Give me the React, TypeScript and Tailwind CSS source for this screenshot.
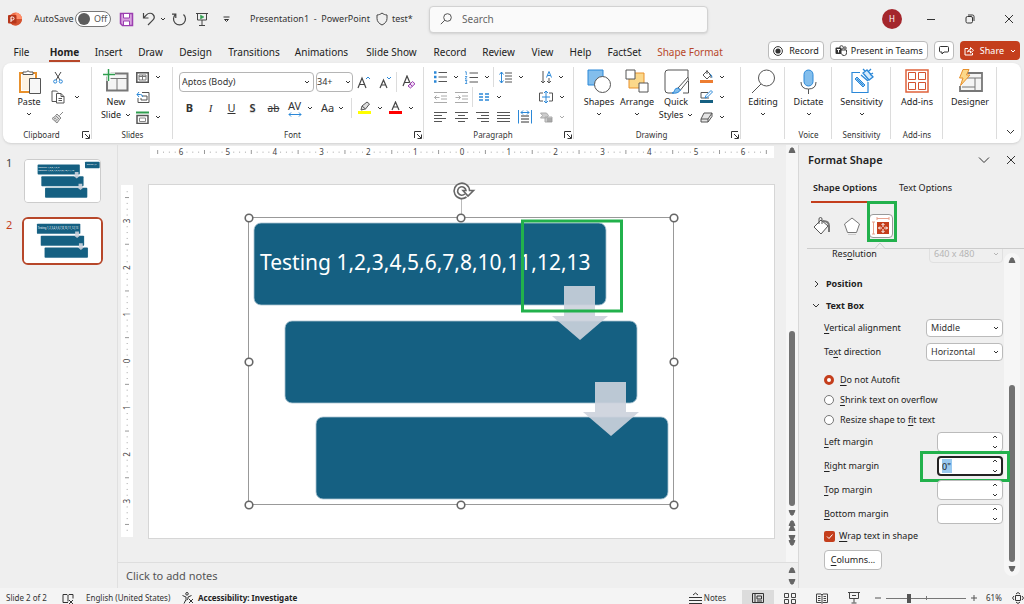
import type { ReactNode } from "react";

type IconProps = { w: number; h: number; children: ReactNode; className?: string };

function Icon({ w, h, children, className = "" }: IconProps) {
  return (
    <svg width={w} height={h} viewBox={`0 0 ${w} ${h}`} fill="none" stroke="#555" className={`shrink-0 ${className}`} aria-hidden="true">
      {children}
    </svg>
  );
}

function Chevron({ color = "#333", flip = false }: { color?: string; flip?: boolean }) {
  return (
    <Icon w={6} h={4}>
      <path d={flip ? "M1 3l2-2 2 2" : "M1 1l2 2 2-2"} stroke={color} />
    </Icon>
  );
}

function Tool({ label, children, wide = false }: { label: string; children: ReactNode; wide?: boolean }) {
  return (
    <button aria-label={label} className={`flex h-5 shrink-0 items-center justify-center ${wide ? "w-8 gap-1.5" : "w-[21px]"}`}>
      {children}
    </button>
  );
}

function Drop({ label }: { label: string }) {
  return (
    <button aria-label={label} className="flex h-5 w-2.5 shrink-0 items-center justify-center">
      <Chevron />
    </button>
  );
}

function Launcher({ label }: { label: string }) {
  return (
    <button aria-label={label} className="absolute right-0.5 bottom-1">
      <Icon w={8} h={8}>
        <path d="M7 .5H.5V7M3 3l4 4M7.500 3.500v4h-4" stroke="#333" />
      </Icon>
    </button>
  );
}

function Group({ name, className, launcher = false, children }: { name: string; className: string; launcher?: boolean; children: ReactNode }) {
  return (
    <section className={`relative flex shrink-0 flex-col ${className}`}>
      <div className="flex h-16 pt-1">{children}</div>
      <div className={`text-center text-[8px] leading-4 text-[#333] ${launcher ? "pr-3" : ""}`}>{name}</div>
      {launcher && <Launcher label={`${name} settings`} />}
      <span className="absolute top-1 right-0 bottom-1 w-px bg-[#dcdcdc]" />
    </section>
  );
}

function BigButton({ icon, lines, chevron = false, className = "" }: { icon: ReactNode; lines: string[]; chevron?: boolean; className?: string }) {
  return (
    <button className={`flex flex-col items-center text-[9px] leading-[13px] text-[#222] ${className}`}>
      <span className="flex h-7 items-center">{icon}</span>
      {lines.map((line, i) => (
        <span key={line} className="flex items-center gap-1 whitespace-nowrap">
          {line}
          {i === 1 && <Chevron />}
        </span>
      ))}
      {chevron && <span className="flex h-3 items-center"><Chevron /></span>}
    </button>
  );
}

function Lines({ rows }: { rows: [number, number][] }) {
  return (
    <Icon w={13} h={12}>
      {rows.map(([x1, x2], i) => (
        <path key={i} d={`M${x1} ${i * 3 + 1.5}H${x2}`} />
      ))}
    </Icon>
  );
}

const BLUE = "#2b88d8";

function TitleBar() {
  return (
    <header className="flex h-[38px] shrink-0 items-center text-[10px] text-[#333]">
      <div className="flex w-[429px] shrink-0 items-center pl-2">
        <svg width="14" height="14" viewBox="0 0 14 14" aria-hidden="true">
          <circle cx="7.5" cy="7" r="6.5" fill="#ed6c47" />
          <path d="M7.5.5A6.5 6.5 0 0 1 14 7H7.500z" fill="#ff8f6b" />
          <path d="M1 7h13a6.500 6.500 0 0 1-12 3.500z" fill="#d35230" />
          <rect y="3" width="8.500" height="8.500" rx="1" fill="#b7361a" />
          <path d="M3 10V5h1.500a1.400 1.400 0 0 1 0 3H3" fill="none" stroke="#fff" />
        </svg>
        <label htmlFor="autosave" className="ml-3 w-[37px] text-[9px] whitespace-nowrap">AutoSave</label>
        <span className="relative ml-1 flex h-4 w-9 items-center rounded-full border border-[#777] bg-white">
          <input id="autosave" type="checkbox" className="absolute inset-0 m-0 opacity-0" />
          <span className="ml-0.5 size-3 rounded-full bg-[#5c5c5c]" />
          <span className="ml-1 text-[9px] text-[#555]">Off</span>
        </span>
        <button aria-label="Save" className="ml-2">
          <Icon w={15} h={15}>
            <path d="M1.500 1.500h12v12h-10l-2-2z" fill="#d9a3e0" stroke="#9b3fb0" strokeWidth="1.500" />
            <path d="M4.500 2v4h6V2M4.500 13V9h6v4" fill="#fff" stroke="#9b3fb0" />
          </Icon>
        </button>
        <button aria-label="Undo" className="ml-2">
          <Icon w={14} h={14}>
            <path d="M1.500 1v5h5M1.500 6l3-3.200c2-2 5-2 6.500-.3 1.600 1.700 1.500 4-.2 5.700L6 13" stroke="#444" strokeWidth="1.200" />
          </Icon>
        </button>
        <span className="ml-0.5 flex"><Drop label="Undo history" /></span>
        <button aria-label="Redo" className="ml-1">
          <Icon w={15} h={14}>
            <path d="M3.500 2.500A6 6 0 1 0 11.500 2.500M3.800 6V2.200H0" stroke="#444" strokeWidth="1.200" />
          </Icon>
        </button>
        <button aria-label="Start from beginning" className="ml-2">
          <Icon w={14} h={14}>
            <path d="M1 1.500h12M2.500 2v6h9V2M7 8v5M4 13.500h6" stroke="#444" />
            <path d="M5.500 3v4l3.500-2z" fill="#2f9e4f" stroke="#2f9e4f" strokeWidth=".5" />
          </Icon>
        </button>
        <button aria-label="Customize toolbar" className="ml-3.5">
          <Icon w={7} h={7}>
            <path d="M.5 1h6M1.500 3.500h4l-2 2z" stroke="#333" />
          </Icon>
        </button>
        <h1 className="ml-5 whitespace-pre text-[9px]">Presentation1  -  PowerPoint</h1>
        <Icon w={12} h={14} className="ml-1.5">
          <path d="M6 1c1.500 1.300 3 1.800 5 2v3.500c0 3-2 5-5 6.500-3-1.500-5-3.500-5-6.500V3c2-.2 3.500-.7 5-2z" stroke="#444" />
        </Icon>
        <span className="ml-1 text-[9px]">test*</span>
      </div>
      <div className="flex h-[27px] max-w-[480px] flex-1 items-center rounded border border-[#d2d2d2] bg-[#fafafa] shadow-sm">
        <Icon w={12} h={12} className="ml-2.5">
          <circle cx="7.500" cy="4.500" r="3.800" />
          <path d="M4.800 7.200L.8 11.200" />
        </Icon>
        <input type="search" aria-label="Search" placeholder="Search" className="ml-2.5 w-full bg-transparent text-[10px] outline-none placeholder:text-[#666]" />
      </div>
      <div className="ml-auto flex w-[316px] items-center justify-end">
        <button aria-label="Account" className="size-5 rounded-full bg-[#a4262c] text-[8px] text-white">H</button>
        <button aria-label="Minimize" className="ml-6"><Icon w={10} h={10}><path d="M1 5.500h8" stroke="#333" /></Icon></button>
        <button aria-label="Restore" className="ml-[29px]">
          <Icon w={10} h={10}>
            <rect x="1" y="2.500" width="6.500" height="6.500" rx="1.500" stroke="#333" />
            <path d="M3 1h4.500Q9 1 9 2.500V7" stroke="#333" />
          </Icon>
        </button>
        <button aria-label="Close" className="mr-2.5 ml-[29px]"><Icon w={10} h={10}><path d="M1 1l8 8M9 1L1 9" stroke="#333" /></Icon></button>
      </div>
    </header>
  );
}

const tabs: [string, string][] = [
  ["File", "w-[43px]"],
  ["Home", "w-[43px]"],
  ["Insert", "w-[45px]"],
  ["Draw", "w-[39px]"],
  ["Design", "w-[51px]"],
  ["Transitions", "w-[66px]"],
  ["Animations", "w-[69px]"],
  ["Slide Show", "w-[71px]"],
  ["Record", "w-[46px]"],
  ["Review", "w-[51px]"],
  ["View", "w-[37px]"],
  ["Help", "w-[39px]"],
  ["FactSet", "w-[49px]"],
  ["Shape Format", "w-[82px]"],
];

function TabRow() {
  return (
    <div className="flex h-[25px] shrink-0 items-center">
      <nav className="flex pt-1 text-[10px] leading-4 text-[#222]">
        {tabs.map(([name, width]) => (
          <a
            key={name}
            href={`#${name.toLowerCase().replace(" ", "-")}`}
            className={`flex shrink-0 justify-center whitespace-nowrap ${width}`}
          >
            <span className={name === "Home" ? "border-b-2 border-[#b7472a] px-px font-bold" : name === "Shape Format" ? "text-[#b7472a]" : ""}>
              {name}
            </span>
          </a>
        ))}
      </nav>
      <div className="ml-auto flex items-center gap-1.5 pr-1 text-[9px] text-[#222]">
        <button className="flex h-[19px] items-center gap-1.5 rounded border border-[#bbb] bg-white px-1">
          <Icon w={10} h={10}>
            <circle cx="5" cy="5" r="4.400" stroke="#333" />
            <circle cx="5" cy="5" r="2.600" fill="#333" stroke="none" />
          </Icon>
          Record
        </button>
        <button className="flex h-[19px] items-center gap-1 rounded border border-[#bbb] bg-white px-1 whitespace-nowrap">
          <Icon w={12} h={11}>
            <circle cx="6.500" cy="2.500" r="1.800" stroke="#444" />
            <circle cx="10" cy="3" r="1.200" stroke="#444" />
            <path d="M5 5h6.500v2.500a2.500 2.500 0 0 1-5 1" stroke="#444" />
            <rect x=".5" y="2.500" width="6" height="6.500" rx="1" fill="#333" stroke="none" />
            <path d="M2 4.500h3M3.500 4.500v3" stroke="#fff" />
          </Icon>
          Present in Teams
        </button>
        <button aria-label="Comments" className="flex h-[19px] w-5 items-center justify-center rounded border border-[#bbb] bg-white">
          <Icon w={10} h={9}>
            <path d="M1.500.5h7q1 0 1 1v3.500q0 1-1 1H5L3 8V6H1.500q-1 0-1-1V1.500q0-1 1-1z" stroke="#333" />
          </Icon>
        </button>
        <button className="flex h-[19px] items-center gap-1.5 rounded bg-[#c43e1c] px-1 text-white">
          <Icon w={10} h={10}>
            <path d="M4 2.500H1v6.500h7.500V7M3.500 6q.5-2.500 3-2.500V1.500l3 2.800-3 2.700V5Q4.500 5 3.500 6z" stroke="#fff" />
          </Icon>
          Share
          <Chevron color="#fff" />
        </button>
      </div>
    </div>
  );
}

function ClipboardGroup() {
  return (
    <Group name="Clipboard" className="w-[89px]" launcher>
      <BigButton
        className="ml-2.5 w-8"
        chevron
        lines={["Paste"]}
        icon={
          <Icon w={23} h={25}>
            <path d="M2 4h16v19H2z" fill="#fff" stroke="#e8912d" strokeWidth="2" />
            <path d="M4 6h12v15H4z" fill="#fdf3e3" stroke="none" />
            <path d="M5 5.500V3h3.500a1.600 1.600 0 0 1 3 0H15v2.500z" fill="#fff" />
            <path d="M11.500 9.500h11v15h-11z" fill="#f7f7f7" />
          </Icon>
        }
      />
      <div className="ml-0.5 flex flex-col">
        <Tool label="Cut">
          <Icon w={10} h={13}>
            <path d="M2 1l5 8M8 1L3 9" stroke="#444" />
            <circle cx="2.200" cy="10.500" r="1.600" stroke={BLUE} />
            <circle cx="7.800" cy="10.500" r="1.600" stroke={BLUE} />
          </Icon>
        </Tool>
        <div className="flex gap-1">
          <Tool label="Copy">
            <Icon w={14} h={14}>
              <path d="M5 11.500H1V1h4.500l1.500 1.500" />
              <path d="M5.500 3.500H10l3 3v6.500H5.500zM10 3.500v3h3M7.500 8.500h3.500M7.500 10.500h3.500" fill="#fff" />
            </Icon>
          </Tool>
          <Drop label="Copy options" />
        </div>
        <Tool label="Format painter">
          <Icon w={13} h={13}>
            <path d="M12 1L8.500 4.500M6 3l4 4-1.500 1.500-4-4zM4.500 5L1 7.500 6 12l2.500-3.500M3 8l2-1M4.500 10l2-2" stroke="#888" fill="#ddd" />
          </Icon>
        </Tool>
      </div>
    </Group>
  );
}

function SlidesGroup() {
  return (
    <Group name="Slides" className="w-[81px]">
      <BigButton
        className="ml-1.5 w-9"
        lines={["New", "Slide"]}
        icon={
          <Icon w={26} h={24}>
            <path d="M4 4.500h20.500v17H4z" stroke="#777" strokeWidth="2" fill="#f4f4f4" />
            <path d="M4 9.500h20M14 9.500v12" stroke="#777" />
            <path d="M0 5.500h12M5.500 0v12" stroke="#fff" strokeWidth="4" />
            <path d="M0 5.500h12M5.500 0v12" stroke="#2f9e4f" strokeWidth="1.500" />
          </Icon>
        }
      />
      <div className="-ml-0.5 flex flex-col">
        <Tool label="Layout" wide>
          <Icon w={13} h={11}>
            <path d="M.8.800h11.500v9.500H.8z" strokeWidth="1.500" />
            <path d="M3 3h7v5H3zM6.500 3v5M3 4.500h7" stroke="#777" />
          </Icon>
          <Chevron />
        </Tool>
        <Tool label="Reset slide">
          <Icon w={14} h={12}>
            <path d="M6 1.500h7v10H2V7M6 5h5v4H5V7" />
            <path d="M1 3.500h3.500q2 0 2 2.500M3 1L1 3.500 3 6" stroke={BLUE} />
          </Icon>
        </Tool>
        <Tool label="Section" wide>
          <Icon w={13} h={13}>
            <path d="M0 1.500h13" stroke="#2f9e4f" strokeWidth="2" />
            <path d="M1 4.500h11v8H1z" strokeWidth="1.500" />
            <path d="M3.500 7h6v3.500h-6z" stroke="#888" />
          </Icon>
          <Chevron />
        </Tool>
      </div>
    </Group>
  );
}

function FontGroup() {
  return (
    <Group name="Font" className="w-[251px]" launcher>
      <div className="flex flex-col gap-1.5 pl-1.5 text-[#333]">
        <div className="flex items-center pt-[5px]">
          <span className="relative mr-0.5 flex">
            <select aria-label="Font" className="h-5 w-[135px] appearance-none rounded border border-[#b5b5b5] bg-white px-0.5 text-[9px]">
              <option>Aptos (Body)</option>
            </select>
            <span className="pointer-events-none absolute top-2 right-1"><Chevron /></span>
          </span>
          <span className="relative flex">
            <select aria-label="Font size" className="h-5 w-[37px] appearance-none rounded border border-[#b5b5b5] bg-white text-[9px]">
              <option>34+</option>
            </select>
            <span className="pointer-events-none absolute top-2 right-0.5"><Chevron /></span>
          </span>
          <Tool label="Increase font size">
            <Icon w={13} h={14}><path d="M1 13L5 3l4 10M2.500 9.500h5" stroke="#444" strokeWidth="1.200" /><path d="M9 4l2-2 2 2" stroke={BLUE} /></Icon>
          </Tool>
          <Tool label="Decrease font size">
            <Icon w={12} h={14}><path d="M1 13l3.500-8L8 13M2.500 10h4" stroke="#444" strokeWidth="1.200" /><path d="M8 2l2 2 2-2" stroke={BLUE} /></Icon>
          </Tool>
          <span className="mx-px h-5 w-px bg-[#dcdcdc]" />
          <Tool label="Clear formatting">
            <Icon w={14} h={14}>
              <path d="M1 11L5 1l3 7M2.500 7.500H7" stroke="#444" strokeWidth="1.200" />
              <path d="M6 11l4.500-4.500 2.500 2.300L8.500 13zM8 9l2.500 2.500" fill="#f2dcf5" stroke="#9b3fb0" />
            </Icon>
          </Tool>
        </div>
        <div className="flex items-center text-[11px]">
          <Tool label="Bold"><b>B</b></Tool>
          <Tool label="Italic"><i className="font-['Liberation_Serif',serif]">I</i></Tool>
          <Tool label="Underline"><u>U</u></Tool>
          <Tool label="Shadow"><span className="font-semibold text-shadow-xs">S</span></Tool>
          <Tool label="Strikethrough"><s className="text-[10px]">ab</s></Tool>
          <Tool label="Character spacing">
            <span className="flex flex-col items-center text-[11px] leading-3">
              AV
              <Icon w={14} h={5}><path d="M1 2.500h12M3 .5l-2 2 2 2M11 .5l2 2-2 2" stroke={BLUE} /></Icon>
            </span>
          </Tool>
          <Drop label="Spacing options" />
          <button className="ml-1.5 flex h-5 w-7 items-center gap-1 text-[11px]">
            Aa <Chevron />
          </button>
          <span className="mx-0.5 h-5 w-px bg-[#dcdcdc]" />
          <Tool label="Highlight">
            <Icon w={14} h={14}>
              <path d="M0 11.500h13" stroke="#ffff00" strokeWidth="3" />
              <path d="M3 9l1-4 5-4 2.500 2-4 5zM4 5l3.500 3" fill="#ddd" />
            </Icon>
          </Tool>
          <Drop label="Highlight color" />
          <Tool label="Font color">
            <Icon w={13} h={14}>
              <path d="M0 11.500h13" stroke="#f00" strokeWidth="3" />
              <path d="M3 9l3.500-8L10 9M4.500 6h4" stroke="#444" strokeWidth="1.200" />
            </Icon>
          </Tool>
          <Drop label="Font color options" />
        </div>
      </div>
    </Group>
  );
}

function ParagraphGroup() {
  return (
    <Group name="Paragraph" className="w-[150px]" launcher>
      <div className="flex w-[108px] flex-col pl-1.5">
        <div className="flex">
          <Tool label="Bullets">
            <Icon w={13} h={12}>
              <path d="M4.500 1.500H13M4.500 6H13M4.500 10.500H13" />
              <path d="M0 1.500h2.500M0 6h2.500M0 10.500h2.500" stroke={BLUE} strokeWidth="2.500" />
            </Icon>
          </Tool>
          <Drop label="Bullet styles" />
          <Tool label="Numbering">
            <Icon w={13} h={13}>
              <path d="M4.500 2H13M4.500 6.500H13M4.500 11H13" />
              <path d="M0 .8h1.300V4M0 5.500h2L0 8h2.200M0 9.500h2L1 11l1 1.500H0" stroke={BLUE} strokeWidth=".8" />
            </Icon>
          </Tool>
          <Drop label="Number styles" />
          <span className="mx-px h-5 w-px shrink-0 bg-[#dcdcdc]" />
          <Tool label="Line spacing">
            <Icon w={13} h={13}>
              <path d="M6 2h7M6 5h7M6 8h7M6 11h7" />
              <path d="M2.500 1v11M.5 3.500l2-2.500 2 2.500M.5 9.500l2 2.500 2-2.500" stroke={BLUE} />
            </Icon>
          </Tool>
          <Drop label="Line spacing options" />
        </div>
        <div className="flex items-center">
          <Tool label="Decrease indent">
            <Icon w={13} h={11}><path d="M0 .5h13M7 4h6M7 7h6M0 10.500h13M.5 5.500h5M2.500 3.500l-2 2 2 2" stroke="#aaa" /></Icon>
          </Tool>
          <Tool label="Increase indent">
            <Icon w={13} h={11}><path d="M0 .5h13M7 4h6M7 7h6M0 10.500h13M.5 5.500h5M3.500 3.500l2 2-2 2" stroke="#aaa" /></Icon>
          </Tool>
          <span className="h-5 w-px bg-[#dcdcdc]" />
          <Tool label="Columns">
            <Icon w={10} h={8}><path d="M0 1h4M6 1h4M0 4h4M6 4h4M0 7h4M6 7h4" stroke={BLUE} strokeWidth="1.300" /></Icon>
          </Tool>
          <Drop label="Column options" />
        </div>
        <div className="flex">
          <Tool label="Align left"><Lines rows={[[0, 13], [0, 8], [0, 12], [0, 8]]} /></Tool>
          <Tool label="Center"><Lines rows={[[0, 13], [3, 10], [0, 13], [3, 10]]} /></Tool>
          <Tool label="Align right"><Lines rows={[[0, 13], [5, 13], [1, 13], [5, 13]]} /></Tool>
          <Tool label="Justify"><Lines rows={[[0, 13], [0, 13], [0, 13], [0, 13]]} /></Tool>
          <Tool label="Distributed">
            <Icon w={14} h={14}>
              <path d="M3 6h8M3 9h8M3 12h8" stroke="#333" />
              <path d="M.5 0v13.500M13.500 0v13.500M3 2.500h8M5 .5l-2 2 2 2M9 .5l2 2-2 2" stroke={BLUE} />
            </Icon>
          </Tool>
        </div>
      </div>
      <div className="flex flex-col pl-1">
        <Tool label="Text direction" wide>
          <Icon w={11} h={13}>
            <path d="M2 0v12M0 10l2 2 2-2M8 7v5M6 10l2 2 2-2" />
            <path d="M5.500 6.500L8 .5l2.500 6M6.500 4.500h3" stroke={BLUE} />
          </Icon>
          <Chevron />
        </Tool>
        <Tool label="Align text" wide>
          <Icon w={14} h={12}>
            <path d="M4 2H.5v8H4M10 2h3.500v8H10" />
            <path d="M3 6h8M7 0v12M5 2l2-2 2 2M5 10l2 2 2-2" stroke={BLUE} />
          </Icon>
          <Chevron />
        </Tool>
        <Tool label="Convert to SmartArt" wide>
          <Icon w={13} h={11}>
            <path d="M.5 1h6l2 2.500-2 2.500h-6l2-2.500zM5 5h7v5H5z" fill="#ccc" stroke="#aaa" />
            <path d="M7 7h5M7 9h5" stroke="#888" />
          </Icon>
          <Chevron color="#aaa" />
        </Tool>
      </div>
    </Group>
  );
}

function DrawingGroup() {
  return (
    <Group name="Drawing" className="w-[167px]" launcher>
      <BigButton
        className="ml-1.5 w-[38px]"
        chevron
        lines={["Shapes"]}
        icon={
          <Icon w={24} h={24}>
            <path d="M1 1h15v15H1z" fill="#83beec" stroke={BLUE} />
            <circle cx="15.500" cy="15.500" r="8" fill="#fff" />
          </Icon>
        }
      />
      <BigButton
        className="w-[38px]"
        chevron
        lines={["Arrange"]}
        icon={
          <Icon w={24} h={24}>
            <path d="M4 4h15v15H4z" fill="#fbd88a" stroke="#e8912d" />
            <path d="M1 1h9v9H1zM14 14h9v9h-9z" fill="#fff" />
          </Icon>
        }
      />
      <BigButton
        className="w-10"
        lines={["Quick", "Styles"]}
        icon={
          <Icon w={25} h={25}>
            <path d="M10 24H4q-3 0-3-3V4q0-3 3-3h20v7" fill="#fff" />
            <path d="M24 8L14 19l2.500 2L24.500 11z" fill="#fff" />
            <path d="M14 19q-3 0-3.500 2.500T8 24q6 1 8.500-3z" fill="#83beec" stroke={BLUE} />
            <path d="M24.500 12v12H19" />
          </Icon>
        }
      />
      <div className="flex flex-col">
        <Tool label="Shape fill" wide>
          <Icon w={13} h={14}>
            <path d="M0 11.500h13" stroke="#ed7d31" strokeWidth="3" />
            <path d="M3 5l4-4 4 4-4 4zM7 0v4M9 4l2 1v3" fill="#fff" />
            <path d="M10 4q2 1 2 3.500" stroke={BLUE} />
          </Icon>
          <Chevron />
        </Tool>
        <Tool label="Shape outline" wide>
          <Icon w={13} h={14}>
            <path d="M0 11.500h13" stroke="#156082" strokeWidth="3" />
            <path d="M8 2.500H1V8h8" />
            <path d="M5 8l1-2.500L11 .5 12.500 2 7.500 7z" fill="#fff" stroke={BLUE} />
          </Icon>
          <Chevron />
        </Tool>
        <Tool label="Shape effects" wide>
          <Icon w={13} h={11}>
            <path d="M4 1h8l-4 6H1zM1 7v3h7V7M8 10l4-5.500V1" fill="#e5e5e5" />
          </Icon>
          <Chevron />
        </Tool>
      </div>
    </Group>
  );
}

function Ribbon() {
  return (
    <div className="mx-[3px] flex h-20 shrink-0 rounded-lg bg-white shadow">
      <ClipboardGroup />
      <SlidesGroup />
      <FontGroup />
      <ParagraphGroup />
      <DrawingGroup />
      <Group name="" className="w-11">
        <BigButton
          className="w-full"
          chevron
          lines={["Editing"]}
          icon={<Icon w={25} h={25}><circle cx="15.500" cy="9" r="8" /><path d="M10 15L1 24" /></Icon>}
        />
      </Group>
      <Group name="Voice" className="w-[47px]">
        <BigButton
          className="w-full"
          chevron
          lines={["Dictate"]}
          icon={
            <Icon w={17} h={25}>
              <rect x="4" y="1" width="9" height="16" rx="4.500" fill="#83beec" stroke={BLUE} />
              <path d="M1 13q0 7 7.500 7t7.500-7M8.500 20v5" />
            </Icon>
          }
        />
      </Group>
      <Group name="Sensitivity" className="w-[59px]">
        <BigButton
          className="w-full"
          chevron
          lines={["Sensitivity"]}
          icon={
            <Icon w={24} h={26}>
              <path d="M10 4.500H2v20h16V14" stroke={BLUE} strokeWidth="1.200" />
              <path d="M13 5l4-3 6 7-4 3zM11 7l7 6M15 3l-2-2M18 4l3-3M20 7l3-2" stroke={BLUE} strokeWidth="1.300" fill="#d8ebfa" />
              <path d="M5 11l8 8 2-2-8-8zM7 11l6 6" fill="#83beec" stroke={BLUE} />
            </Icon>
          }
        />
      </Group>
      <Group name="Add-ins" className="w-[52px]">
        <BigButton
          className="w-full"
          lines={["Add-ins"]}
          icon={
            <Icon w={24} h={24}>
              <path d="M1 1h22v22H1z" stroke="#e0633d" strokeWidth="1.500" />
              <path d="M3.500 3.500h7v7h-7zM13.500 3.500h7v7h-7zM3.500 13.500h7v7h-7zM13.500 13.500h7v7h-7z" stroke="#d35230" />
            </Icon>
          }
        />
      </Group>
      <Group name="" className="w-[54px]">
        <BigButton
          className="w-full"
          lines={["Designer"]}
          icon={
            <Icon w={25} h={24}>
              <path d="M4 4h20v18H2V17" fill="#f4f4f4" stroke="#777" strokeWidth="1.800" />
              <path d="M9 9h15M17 9v13M4 18h13" stroke="#777" />
              <path d="M5 .5h6L8.500 6H12L2.500 16.500 5 9H1.500z" fill="#fbd88a" stroke="#e8912d" />
            </Icon>
          }
        />
      </Group>
      <button aria-label="Collapse ribbon" className="mt-auto mr-1.5 mb-2 ml-auto">
        <Icon w={9} h={6}><path d="M1 1l3.500 3.500L8 1" stroke="#333" /></Icon>
      </button>
    </div>
  );
}

const blocks = [
  { x: 105, y: 38 },
  { x: 136, y: 136 },
  { x: 167, y: 232 },
];

const handles = [
  [100, 33], [312, 33], [525, 33],
  [100, 177], [525, 177],
  [100, 320], [312, 320], [525, 320],
];

function SlideArt({ lines, corner = false, selected = false }: { lines: string[]; corner?: boolean; selected?: boolean }) {
  return (
    <svg viewBox="0 0 625 353" className="block w-full overflow-visible bg-white" fontFamily="'Noto Sans', sans-serif" role="img" aria-label="Slide">
      {blocks.map((b) => (
        <rect key={b.y} x={b.x} y={b.y} width="352" height="82" rx="7" fill="#156082" stroke="#a9c3d0" strokeWidth=".8" />
      ))}
      {lines.map((line, i) => (
        <text key={i} x="111" y={lines.length > 1 ? 66 + i * 26 : 85} fontSize="21" fill="#fff">{line}</text>
      ))}
      {corner && <rect x="500" y="14" width="122" height="54" rx="7" fill="#156082" />}
      {corner && <text x="514" y="40" fontSize="16" fill="#fff">Testing 1,2</text>}
      {[[0, 0], [31, 96]].map(([dx, dy]) => (
        <path key={dx} d={`M${415 + dx} ${101 + dy}h31v30h13l-28 24-28-24h12z`} fill="#ccd2dc" opacity=".91" />
      ))}
      {selected && (
        <g fill="none" stroke="#666">
          <rect x="99.500" y="32.500" width="425" height="287" stroke="#999" />
          <path d="M312.500 14v16" stroke="#bbb" />
          {handles.map(([x, y]) => (
            <circle key={`${x}-${y}`} cx={x} cy={y} r="3.800" fill="#fff" strokeWidth="1.600" />
          ))}
          <circle cx="312.500" cy="6" r="6.500" fill="#fff" stroke="none" />
          <path d="M317.500 12A7.700 7.700 0 1 1 320.500 5.500h4l-5.500 5.500-5-5.500h3a4.200 4.200 0 1 0-1.200 3.500" strokeWidth="1.600" />
          <rect x="373.500" y="36" width="99" height="90" stroke="#22b14c" strokeWidth="3" />
        </g>
      )}
    </svg>
  );
}

const INCH = 46.7;

function RulerMarks({ size, max }: { size: number; max: number }) {
  const marks = [];
  for (let i = -52; i <= 52; i++) {
    const pos = size / 2 + (i * INCH) / 8;
    if (pos < 1 || pos > size - 1) continue;
    if (i % 8 === 0 && Math.abs(i / 8) <= max) {
      marks.push(
        <text key={i} x={pos} y="9" textAnchor="middle" fontSize="8" fill="#444">
          {Math.abs(i / 8)}
        </text>
      );
      continue;
    }
    const half = i % 4 === 0;
    marks.push(<path key={i} d={half ? `M${pos} 4v4` : `M${pos} 5.500v1.500`} stroke={half ? "#999" : "#c4c4c4"} />);
  }
  return <>{marks}</>;
}

function Triangle({ up = false, double = false }: { up?: boolean; double?: boolean }) {
  return (
    <Icon w={8} h={double ? 11 : 6} className={up ? "rotate-180" : ""}>
      <path d="M1 .5h6L5 5H3z" fill="#666" stroke="#666" strokeLinejoin="round" />
      {double && <path d="M1 5.500h6L5 10H3z" fill="#666" stroke="#666" strokeLinejoin="round" />}
    </Icon>
  );
}

const slides = [
  { lines: ["Testing 1,2,3,4,5,6", "Testing 1,2,3,4,5,6,7,8,10,11,12"], corner: true, active: false },
  { lines: ["Testing 1,2,3,4,5,6,7,8,10,11,12,13"], corner: false, active: true },
];

function Thumbnails() {
  return (
    <ol className="w-[118px] shrink-0 border-r border-[#e0e0e0] pt-2.5">
      {slides.map((s, i) => (
        <li key={i} className={`flex pl-1.5 text-[11px] leading-4 ${s.active ? "pt-3.5 text-[#c43e1c]" : "text-[#444]"}`}>
          <span className="w-4 shrink-0">{i + 1}</span>
          <a
            href={`#slide-${i + 1}`}
            className={`overflow-hidden ${s.active ? "w-[81px] rounded-md border-2 border-[#b7472a]" : "mt-1 ml-0.5 w-[77px] rounded border border-[#ccc]"}`}
          >
            <SlideArt lines={s.lines} corner={s.corner} />
          </a>
        </li>
      ))}
    </ol>
  );
}

function Editor() {
  return (
    <main className="flex min-w-0 flex-1 flex-col">
      <div className="flex min-h-0 flex-1">
        <div className="min-w-0 flex-1 pt-px">
          <div className="pr-3 pl-8">
            <svg viewBox="0 0 622 12" className="block w-full bg-white" aria-hidden="true"><RulerMarks size={622} max={6} /></svg>
          </div>
          <div className="mt-[27px] flex items-start pr-3 pl-[3px]">
            <svg viewBox="0 0 12 352" className="w-3 shrink-0 bg-white" aria-hidden="true">
              <g transform="translate(0 352) rotate(-90)"><RulerMarks size={352} max={3} /></g>
            </svg>
            <div className="ml-4 flex-1 ring ring-[#d6d6d6]">
              <SlideArt lines={slides[1].lines} selected />
            </div>
          </div>
        </div>
        <div className="flex w-3 flex-col items-center bg-[#f6f6f6] pt-0.5">
          <Triangle up />
          <span className="mt-[178px] w-1.5 flex-1 rounded-full bg-[#737373]" />
          <span className="mt-1 flex flex-col items-center gap-1 pb-4">
            <Triangle />
            <Triangle up double />
            <Triangle double />
          </span>
        </div>
      </div>
      <div className="flex h-[26px] shrink-0 items-center border-t border-[#dedede]">
        <textarea aria-label="Notes" placeholder="Click to add notes" rows={1} className="ml-2 h-4 flex-1 resize-none overflow-hidden text-[11px] leading-4 outline-none placeholder:text-[#555]" />
        <span className="flex w-3 flex-col items-center gap-1.5"><Triangle up /><Triangle /></span>
      </div>
    </main>
  );
}

function Key({ text, at = 0 }: { text: string; at?: number }) {
  return (
    <>
      {text.slice(0, at)}
      <span className="underline underline-offset-2">{text[at]}</span>
      {text.slice(at + 1)}
    </>
  );
}

function SelectRow({ id, label, at, value, disabled = false }: { id: string; label: string; at?: number; value: string; disabled?: boolean }) {
  return (
    <div className="flex h-6 items-center justify-between">
      <label htmlFor={id} className={disabled ? "pl-2" : ""}><Key text={label} at={at} /></label>
      <span className="relative flex">
        <select
          id={id}
          disabled={disabled}
          className={`h-[18px] appearance-none rounded border pl-1 text-[9px] ${disabled ? "w-[74px] border-[#e0e0e0] text-[#b5b5b5]" : "w-[77px] border-[#bbb] bg-white text-[#333]"}`}
        >
          <option>{value}</option>
        </select>
        <span className="pointer-events-none absolute top-[7px] right-1"><Chevron color={disabled ? "#b5b5b5" : "#333"} /></span>
      </span>
    </div>
  );
}

function MarginRow({ label, value = "" }: { label: string; value?: string }) {
  const id = label.split(" ")[0].toLowerCase();
  return (
    <div className="relative flex h-6 items-center justify-between">
      <label htmlFor={id}><Key text={label} /></label>
      <span className={`flex h-5 w-[66px] items-center rounded bg-white ${value ? "border-2 border-[#222] pr-[3px] pl-[3px]" : "border border-[#bbb] px-1"}`}>
        <input
          id={id}
          defaultValue={value}
          className={`h-[14px] min-w-0 text-[9px] outline-none ${value ? "w-2.5 bg-[#99c9ef]" : "w-10"}`}
        />
        <span className="ml-auto flex flex-col gap-1.5">
          <button type="button" aria-label={`Increase ${label}`} className="flex"><Chevron flip /></button>
          <button type="button" aria-label={`Decrease ${label}`} className="flex"><Chevron /></button>
        </span>
      </span>
      {value && <span className="pointer-events-none absolute -top-[3px] -right-[7px] h-[31px] w-[90px] border-3 border-[#22b14c]" />}
    </div>
  );
}

const autofit = [
  { id: "no-fit", label: "Do not Autofit", at: 0 },
  { id: "shrink", label: "Shrink text on overflow", at: 0 },
  { id: "resize", label: "Resize shape to fit text", at: 16 },
];

function FormatPane() {
  return (
    <aside className="flex w-[226px] shrink-0 flex-col border-l border-[#d8d8d8] text-[9px] text-[#222]">
      <div className="flex h-[30px] items-center pr-2 pl-[9px]">
        <h2 className="text-[11px] font-semibold">Format Shape</h2>
        <button aria-label="Pane options" className="ml-auto"><Icon w={12} h={8}><path d="M1 1.500l5 5 5-5" stroke="#333" /></Icon></button>
        <button aria-label="Close pane" className="ml-4"><Icon w={10} h={10}><path d="M1 1l8 8M9 1L1 9" stroke="#333" /></Icon></button>
      </div>
      <div className="flex h-7 pl-3">
        <button className="h-7 w-[68px] border-b-2 border-[#c43e1c] font-semibold whitespace-nowrap">Shape Options</button>
        <button className="ml-5 border-b-2 border-transparent whitespace-nowrap">Text Options</button>
      </div>
      <div className="relative ml-2 flex h-[46px] items-center border-b border-[#ccc] pl-1.5">
        <button aria-label="Fill & Line" className="w-5">
          <Icon w={18} h={18}>
            <path d="M1 10l7-7 7 6-7 8z" fill="#fff" />
            <path d="M6 7V2q0-1.500 1.500-1.500T9 2v5" />
            <path d="M10 4q6 0 6 5v6" stroke="#777" strokeWidth="2" />
          </Icon>
        </button>
        <button aria-label="Effects" className="ml-2.5 w-5">
          <Icon w={18} h={18}>
            <path d="M9 1l7.500 6-3 8.500h-9L1.500 7z" fill="#fff" stroke="#777" />
            <path d="M5 17.500h8" stroke="#ccc" />
          </Icon>
        </button>
        <span className="relative ml-1.5">
          <button aria-label="Size & Properties" className="flex size-6 items-center justify-center rounded border border-[#999] bg-white">
            <Icon w={18} h={18}>
              <path d="M5 1.500h12M5 0v3M17 0v3M1.500 5v12M0 5h3M0 17h3" stroke="#e8a28e" />
              <rect x="5" y="5" width="12" height="12" fill="#c43e1c" stroke="none" />
              <path d="M11 6.500v3.500M11 12v3.500M6.500 11H10M12 11h3.500M9.500 8L11 6.500 12.500 8M9.500 14l1.500 1.500 1.500-1.500M8 9.500L6.500 11 8 12.500M14 9.500l1.500 1.500-1.500 1.500" stroke="#fff" />
            </Icon>
          </button>
          <span className="pointer-events-none absolute -top-[13px] -left-0.5 h-[41px] w-[30px] border-3 border-[#22b14c]" />
        </span>
        <svg width="12" height="7" viewBox="0 0 12 7" className="absolute -bottom-px left-[67px] fill-[#f0f0f0] stroke-[#ccc]" aria-hidden="true">
          <path d="M1 6.500l5-5.500 5 5.500" />
        </svg>
      </div>
      <div className="flex min-h-0 flex-1 overflow-hidden">
        <form className="-mt-[7px] flex-1 pr-px pl-[25px]">
          <SelectRow id="resolution" label="Resolution" at={3} value="640 x 480" disabled />
          <div className="mt-1.5 flex h-6 items-center gap-1.5 font-bold">
            <button type="button" aria-label="Expand Position" className="-ml-2.5"><Icon w={6} h={8}><path d="M1 1l3 3-3 3" stroke="#333" /></Icon></button>
            Position
          </div>
          <div className="flex h-5 items-center gap-1.5 font-bold">
            <button type="button" aria-label="Collapse Text Box" className="-ml-3"><Icon w={8} h={6}><path d="M1 1l3 3 3-3" stroke="#333" /></Icon></button>
            Text Box
          </div>
          <SelectRow id="valign" label="Vertical alignment" value="Middle" />
          <SelectRow id="tdir" label="Text direction" at={2} value="Horizontal" />
          <fieldset className="mt-1.5">
            {autofit.map((o) => (
              <div key={o.id} className="flex h-5 items-center gap-1.5">
                <input
                  type="radio"
                  id={o.id}
                  name="autofit"
                  defaultChecked={o.id === "no-fit"}
                  className="size-2.5 appearance-none rounded-full border border-[#777] bg-white checked:border-3 checked:border-[#c43e1c]"
                />
                <label htmlFor={o.id} className="whitespace-nowrap"><Key text={o.label} at={o.at} /></label>
              </div>
            ))}
          </fieldset>
          <MarginRow label="Left margin" />
          <MarginRow label="Right margin" value={'0"'} />
          <MarginRow label="Top margin" />
          <MarginRow label="Bottom margin" />
          <div className="flex h-5 items-center gap-1">
            <span className="relative flex">
              <input id="wrap" type="checkbox" defaultChecked className="size-[11px] appearance-none rounded-xs bg-[#c43e1c]" />
              <Icon w={11} h={11} className="pointer-events-none absolute"><path d="M3 5.500l2 2 3.500-4" stroke="#fff" /></Icon>
            </span>
            <label htmlFor="wrap"><Key text="Wrap text in shape" /></label>
          </div>
          <button type="button" className="mt-1 h-5 w-[58px] rounded border border-[#bbb] bg-white"><Key text="Columns..." /></button>
        </form>
        <div className="mt-1 mr-1 mb-3 flex w-4 flex-col items-center rounded-full bg-[#f6f6f6] pt-1 pb-1">
          <Triangle up />
          <span className="mt-[122px] mb-1 w-1.5 flex-1 rounded-full bg-[#737373]" />
          <Triangle />
        </div>
      </div>
    </aside>
  );
}

function StatusBar() {
  return (
    <footer className="flex h-4 shrink-0 items-center bg-[#f4f4f4] pt-1 pl-1.5 text-[8px] leading-3 whitespace-nowrap text-[#333]">
      <span className="w-14">Slide 2 of 2</span>
      <Icon w={12} h={11}><path d="M6 9.500H1v-8h4l1 1v6M6 2.500l1-1h4v4M7 7l4 4M11 7l-4 4" stroke="#333" /></Icon>
      <span className="ml-3 w-24">English (United States)</span>
      <Icon w={12} h={12}>
        <circle cx="5" cy="1.800" r="1.300" stroke="#333" />
        <path d="M.5 3.500L4 5v2.500l-2 4M9.500 3.500L6 5v2M4.500 8L6 7M7 7l4 4M11 7l-4 4" stroke="#333" />
      </Icon>
      <b className="ml-1 text-[#222]">Accessibility: Investigate</b>
      <div className="ml-auto flex items-center">
        <button className="flex items-center gap-0.5">
          <Icon w={13} h={12}><path d="M4 3l2.500-2L9 3M0 5.500h13M0 8.500h13M0 11.500h13" stroke="#333" /></Icon>
          Notes
        </button>
        <button aria-label="Normal" className="-my-1 ml-4 flex h-4 w-8 items-center justify-center bg-[#dcdcdc]">
          <Icon w={12} h={10}><path d="M.5.500h11v9H.5zM3 .5v9M5 3h4.500v3H5zM5 8h5" stroke="#333" /></Icon>
        </button>
        <button aria-label="Slide sorter" className="ml-2.5"><Icon w={12} h={11}><path d="M.5.500h4v4h-4zM7.500.500h4v4h-4zM.5 6.500h4v4h-4zM7.500 6.500h4v4h-4z" stroke="#444" /></Icon></button>
        <button aria-label="Reading view" className="ml-5"><Icon w={12} h={11}><path d="M6 2L5 1H.5v8.500H5l1 1 1-1h4.500V1H7zv8M2 3.500h2.500M2 5.500h2.500M2 7.500h2.500M7.500 3.500H10M7.500 5.500H10M7.500 7.500H10" stroke="#444" /></Icon></button>
        <button aria-label="Slide show" className="ml-5"><Icon w={12} h={12}><path d="M0 .5h12M1.500 1v5.500h9V1M4 3.500h4M6 6.500v4M3.500 11h5" stroke="#444" /></Icon></button>
        <button aria-label="Zoom out" className="ml-3.5"><Icon w={8} h={8}><path d="M1 4h6" /></Icon></button>
        <span className="relative ml-1 flex w-20 items-center">
          <input
            type="range"
            aria-label="Zoom"
            defaultValue={27}
            className="h-px w-full appearance-none bg-[#777] [&::-webkit-slider-thumb]:h-[9px] [&::-webkit-slider-thumb]:w-1 [&::-webkit-slider-thumb]:appearance-none [&::-webkit-slider-thumb]:bg-[#555]"
          />
          <span className="absolute left-1/2 h-1 w-px bg-[#777]" />
        </span>
        <button aria-label="Zoom in" className="ml-1"><Icon w={8} h={8}><path d="M1 4h6M4 1v6" /></Icon></button>
        <span className="ml-2 w-5">61%</span>
        <button aria-label="Fit slide" className="ml-1.5"><Icon w={12} h={12}><path d="M3.500 3.500h5v5h-5zM4 2l2-1.500L8 2M4 10l2 1.500L8 10M2 4L.5 6 2 8M10 4l1.500 2L10 8" stroke="#333" /></Icon></button>
      </div>
    </footer>
  );
}

export default function App() {
  return (
    <div className="flex h-screen min-h-[604px] flex-col overflow-hidden bg-[#efefef] font-['Noto_Sans',sans-serif]">
      <TitleBar />
      <TabRow />
      <Ribbon />
      <div className="mt-0.5 flex min-h-0 flex-1">
        <Thumbnails />
        <Editor />
        <FormatPane />
      </div>
      <StatusBar />
    </div>
  );
}
